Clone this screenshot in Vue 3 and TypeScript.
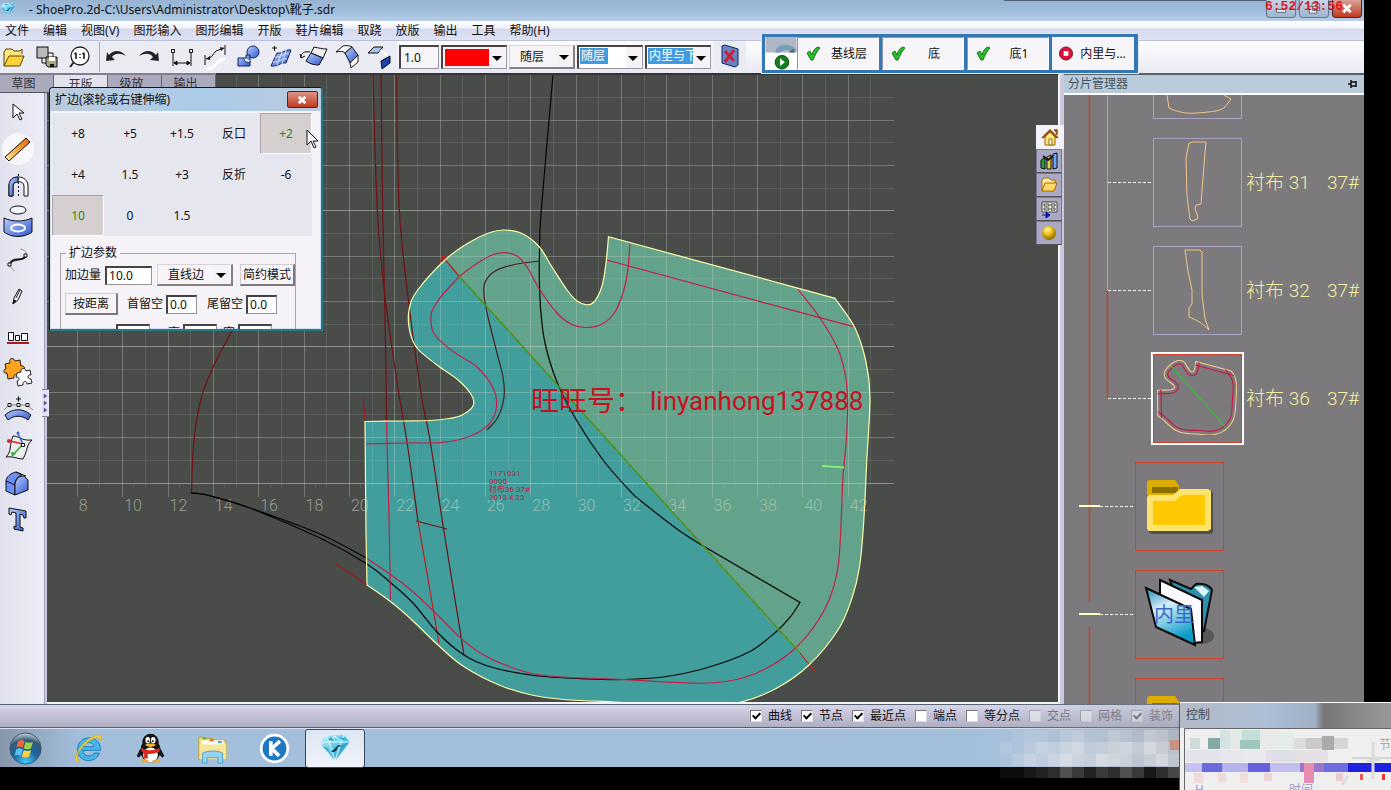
<script setup lang="ts">
import { ref } from 'vue'

type Pt = [number, number]

// Catmull-Rom spline through the given points, written as cubic segments
function spline(points: Pt[], start = 'M'): string {
  let d = `${start}${points[0][0]} ${points[0][1]}`
  for (let i = 0; i < points.length - 1; i++) {
    const p0 = points[Math.max(i - 1, 0)]
    const p1 = points[i]
    const p2 = points[i + 1]
    const p3 = points[Math.min(i + 2, points.length - 1)]
    const c = [
      p1[0] + (p2[0] - p0[0]) / 6, p1[1] + (p2[1] - p0[1]) / 6,
      p2[0] - (p3[0] - p1[0]) / 6, p2[1] - (p3[1] - p1[1]) / 6,
      p2[0], p2[1],
    ].map(n => n.toFixed(1))
    d += `C${c.join(' ')}`
  }
  return d
}

const menus = ['文件', '编辑', '视图(V)', '图形输入', '图形编辑', '开版', '鞋片编辑', '取跷', '放版', '输出', '工具', '帮助(H)']

interface Tool { name: string; art: string }

const fileTools: Tool[] = [
  { name: '打开', art: '<path d="M4 25V11l2-3h6l2 2h6l2-2v5" fill="#ffe680" stroke="#5a4300"/><path d="M4 25l5-10h15l-4 10z" fill="#ffd23c" stroke="#5a4300"/>' },
  { name: '另存', art: '<rect x="4" y="6" width="11" height="11" fill="#b9b9b9" stroke="#111"/><path d="M15 12h5v4M9 17v5h4" fill="none" stroke="#111"/><path d="M13 16h11v10H15l-2-2z" fill="#a8a77a" stroke="#111"/><path d="M16 16h6v4h-6z" fill="#fff"/><path d="M17 23h4v3h-4z" fill="#111"/>' },
  { name: '原始比例', art: '<circle cx="14" cy="15" r="9" fill="#fff" stroke="#222" stroke-width="1.3"/><path d="M8 21l-4 5" stroke="#222" stroke-width="2"/><path d="M10 12v6M18 12v6M8.500 13l2-1M16.500 13l2-1M14 13v1M14 16v1" stroke="#111" stroke-width="1.500" fill="none"/>' },
]

const drawTools: Tool[] = [
  { name: '撤销', art: '<path d="M6 20l1-9 2 3c5-6 12-5 17 1-6-3-11-3-14 1l3 3z" fill="#222"/>' },
  { name: '重做', art: '<path d="M26 20l-1-9-2 3C18 8 11 9 6 15c6-3 11-3 14 1l-3 3z" fill="#222"/>' },
  { name: '测距', art: '<path d="M7 11v14M25 11v14M8 22h16M8 22l3-2v4zM24 22l-3-2v4z" stroke="#111" fill="#111"/><path d="M5.500 8.500h3v3h-3zM23.500 8.500h3v3h-3z" fill="#fff" stroke="#111"/>' },
  { name: '弧长', art: '<path d="M8 27c8 3 8-9 18-9" fill="none" stroke="#fff" stroke-width="3"/><path d="M6 14v10M26 4v10M7 18l5-2 5-6 8-3" fill="none" stroke="#111"/><path d="M7 18l4-3v4zM25 7l-4-1 1 4z" fill="#111"/>' },
  { name: '图形', art: '<circle cx="21" cy="11" r="6" fill="url(#blue)" stroke="#10265a"/><path d="M6 17h8v-3h4v11H6z" fill="url(#blue)" stroke="#10265a"/><path d="M12 17a4 4 0 0 0 7 3" fill="#fff" stroke="#10265a"/>' },
  { name: '网面', art: '<path d="M12 12c6 1 8-4 14-3l-5 13c-5-1-9 4-15 3z" fill="url(#blue)" stroke="#10265a"/><path d="M10 16c6 1 8-4 14-3M8 21c6 1 8-4 14-3M17 11l-5 13M21 9l-4 14" stroke="#dbe6ff" fill="none"/><path d="M7 7h5M9.500 5v5" stroke="#111"/>' },
  { name: '翻转', art: '<path d="M13 12l3-6c5 1 8 2 13 2l-4 9z" fill="#eee" stroke="#111"/><path d="M13 12l12 5-4 7c-5 0-9-1-13-4z" fill="url(#blue)" stroke="#111"/><path d="M3 17c0-5 3-7 9-6M3 17l-1-4M3 17l4-2" fill="none" stroke="#111"/>' },
  { name: '折叠', art: '<path d="M5 11l7-6c4-1 7 0 9 1l-7 6c-2-2-5-2-9-1z" fill="#fff" stroke="#111"/><path d="M14 12l7-6 6 8-8 8z" fill="url(#blue)" stroke="#111"/><path d="M19 22l8-8v7l-7 6z" fill="#fff" stroke="#111"/>' },
  { name: '分离', art: '<path d="M4 12l6-6h9l-5 6z" fill="#a9c3f5" stroke="#111"/><path d="M16 10c6 1 7 4 8 9" fill="none" stroke="#fff" stroke-width="2"/><path d="M17 20l9-5v7l-8 6z" fill="#1c43a8" stroke="#111"/>' },
]

const sideTools: Tool[] = [
  { name: '选择', art: '<path d="M13 10v14l4-4 3 6 2-1-3-6h5z" fill="#fff" stroke="#111"/>' },
  { name: '扩边', art: '<circle cx="18" cy="18" r="16" fill="#fff" opacity=".7"/><path d="M5 26L26 7l4 4L9 30z" fill="url(#amber)" stroke="#111"/>' },
  { name: '对称', art: '<path d="M9 28V18c0-12 19-12 19 0v10h-4V18c0-6-11-6-11 0v10z" fill="#fff" stroke="#111"/><path d="M9 28V18c0-7 4-9 9-9v5c-3 0-5 1-5 4v10z" fill="url(#blue)" stroke="#111"/><path d="M18.500 6v24" stroke="#111" stroke-dasharray="2 2"/>' },
  { name: '投影', art: '<ellipse cx="18" cy="5" rx="8" ry="4" fill="#f4f6ff" stroke="#111"/><path d="M4 13c8 4 20 4 28 0v14c-8 6-20 6-28 0z" fill="url(#blue)" stroke="#111"/><ellipse cx="18" cy="23" rx="7" ry="3.500" fill="none" stroke="#fff" stroke-width="2"/>' },
  { name: '曲线', art: '<path d="M20 7c8 1 8 7 1 10s-12 3-11 6 3 5 5 6" fill="none" stroke="#999"/><path d="M10 22c2-8 14-1 16-9" fill="none" stroke="#111" stroke-width="2"/><path d="M8 21h3v3H8zM24 12h3v3h-3z" fill="#fff" stroke="#111"/>' },
  { name: '铅笔', art: '<path d="M13 25l1-6 5-9 3 2-4 9z" fill="#fff" stroke="#111"/><path d="M16 19l4-8M13 25l1-4 2 1z" stroke="#111" fill="#111"/>' },
  { name: '对齐', art: '<path d="M8.500 16.500h5v8h-5zM15.500 19.500h4v5h-4zM21.500 17.500h6v7h-6z" fill="#fff" stroke="#111"/><path d="M7 27h22" stroke="#b01820" stroke-width="2"/>' },
  { name: '拼图', art: '<path d="M5 11l5-1c-2-5 4-6 5-2l5-1 1 6c4-1 5 4 1 5l1 5-5 1c0-4-5-3-4 1l-6 1-1-6c-4 1-4-4-1-4z" fill="#ffa41c" stroke="#222"/><path d="M17 20l4-1c-1-4 4-5 5-1l4-1 1 5c-4-1-4 4 0 4l1 4-5 1c0-4-5-3-4 1l-5 1-1-5c3 0 3-4-1-4z" fill="#fff" stroke="#222"/>' },
  { name: '加点', art: '<path d="M16 9h5M18.500 6.500v5" stroke="#111" stroke-width="1.200"/><path d="M4 20l5-5h18l6 5" stroke="#888" fill="none"/><path d="M8 13.500h3v3H8zM17 13.500h3v3h-3zM26 13.500h3v3h-3z" fill="#fff" stroke="#111"/><path d="M5 25c8-7 18-7 26 0l-3 5c-6-5-14-5-20 0z" fill="url(#blue)" stroke="#111"/>' },
  { name: '坐标面', art: '<path d="M13 9c6 0 8 5 19 4-6 5-4 10-9 19-6 0-9-3-17-2 6-6 3-11 7-21z" fill="#eee" stroke="#111"/><path d="M23 17L10 14" stroke="#d22" stroke-width="1.500"/><circle cx="9" cy="14" r="2" fill="#d22"/><path d="M23 17L18 7" stroke="#36c" stroke-width="1.500"/><circle cx="18" cy="6" r="1.500" fill="#36c"/><path d="M23 17L13 28" stroke="#3a3" stroke-width="1.500"/><path d="M11 25l5 1-4 4z" fill="#3a3"/><path d="M21.500 16.500h3v3h-3z" fill="#fff" stroke="#111"/>' },
  { name: '立体', art: '<path d="M6 17c0-4 5-8 10-9l6 3c-4 1-7 5-7 9v11l-9-4z" fill="#6a8ff5" stroke="#111"/><path d="M15 31V20c1-6 5-8 9-8l4 4v10z" fill="url(#blue)" stroke="#111"/><path d="M6 17l9 4M16 8l10 4" stroke="#111" fill="none"/>' },
  { name: '文字', art: '<path d="M9 7l17 3v7h-2l-1-3-3-1v13l3 1v3l-9-2v-3l2 1V12l-4-1-1 3-2-1z" fill="url(#blue)" stroke="#111"/>' },
]

const tabs = ['草图', '开版', '级放', '输出']
const layerButtons = ['基线层', '底', '底1']
const offsets = ['+8', '+5', '+1.5', '反口', '+2', '+4', '1.5', '+3', '反折', '-6', '10', '0', '1.5']
const active = ref(new Set([4, 10]))
function toggle(i: number) {
  active.value.has(i) ? active.value.delete(i) : active.value.add(i)
}

const lineWidth = ref('1.0')
const margin = ref('10.0')
const headGap = ref('0.0')
const tailGap = ref('0.0')

const snaps = ref([
  { label: '曲线', on: true, dim: false },
  { label: '节点', on: true, dim: false },
  { label: '最近点', on: true, dim: false },
  { label: '端点', on: false, dim: false },
  { label: '等分点', on: false, dim: false },
  { label: '交点', on: false, dim: true },
  { label: '网格', on: false, dim: true },
  { label: '装饰', on: true, dim: true },
])

// Ruler grid: one column is two ruler units
const step = 45.35
const gridLeft = 77.8
const columns = Array.from({ length: 18 }, (_, i) => ({ x: gridLeft + i * step, n: 8 + i * 2 }))
const rows = Array.from({ length: 18 }, (_, k) => ({ y: 483.5 - k * step / 2, level: k % 6 === 0 ? 'strong' : k % 2 === 0 ? 'mid' : 'weak' }))

const leftEdge: Pt[] = [[365, 421.5], [400, 421], [430, 420.5], [449, 418.5], [462, 415], [473, 406], [471.5, 395], [458, 380], [437, 365], [417, 348], [409.5, 330], [409, 310], [417, 291], [445, 260], [470, 242], [490, 232.5], [505, 230], [522, 233.5], [539, 246.5], [552, 267], [567, 290], [577, 301], [586, 304.7], [594, 302], [602, 286], [606, 263], [608.5, 236.7]]
const rightEdge: Pt[] = [[835, 298.3], [855, 328], [866, 362], [870, 397], [867, 457], [863.5, 525], [859.5, 567], [852, 598], [838, 630], [809, 665], [777, 688], [741, 702], [700, 708], [650, 705], [616, 702], [570, 700], [534, 695.5], [499, 685], [463, 666], [438, 645], [412, 620], [391, 602], [367, 585]]
const outline = spline(leftEdge) + spline(rightEdge, 'L') + 'L366 533Z'

const seams = [
  spline([[365, 444], [407, 443], [440, 442.7], [460, 439.5], [477, 433], [490, 423], [496.5, 407], [493, 388], [477, 367], [453, 351.5], [435, 335], [431, 320], [435, 305], [458, 278], [477, 263.5], [492, 255], [505, 252.7], [517, 256], [527, 267], [540, 290], [557, 313], [571, 324], [587, 327.5], [603, 323.5], [615, 312], [623, 293], [627.5, 273], [630, 243.5]]),
  'M606.700 260L853.300 326.700',
  spline([[797.7, 289], [820, 318], [837, 347], [845, 373], [847.5, 400], [846.5, 437], [843, 477], [841, 525], [838, 567], [829, 600], [813, 628], [791, 652], [763, 670], [734, 680], [699, 683.3], [624, 679.7], [549, 676], [513, 668], [481, 653.5], [459, 636.5], [434, 611.5], [406, 586], [367, 558.5]]),
  'M386.500 420L389.300 530L390.400 600',
]
const darkReds = [
  spline([[381, 75], [382.7, 210], [384.3, 287], [386, 370], [386.5, 420]]),
  spline([[373, 75], [377.3, 210], [384.3, 290], [396.7, 380], [406.7, 440], [418, 521]]),
  spline([[396.5, 75], [399.3, 210], [410, 313], [421.7, 397], [430, 440], [443.3, 527], [464, 655]]),
  spline([[232, 331], [215, 363], [203, 392], [196.7, 420], [193, 453], [191.5, 493]]),
  'M416 521L447 529',
]
const blacks = [
  spline([[191, 493], [207, 495], [250, 508], [320, 534], [367, 558.5]]),
  spline([[191, 493], [207, 495], [250, 508], [320, 538], [367, 564], [391, 583], [413, 603], [438, 633], [464, 655], [491, 667], [534, 675.5], [588, 679], [624, 679.5], [663, 677], [706, 668], [749, 652], [777, 631], [791, 616], [800, 602.5]]) +
    spline([[698.6, 543.3], [677, 529], [641, 501], [630, 491], [603, 460], [577, 421], [557, 382], [545, 343], [540.7, 310], [539.3, 277], [539.7, 243], [541.3, 210], [553, 75]], 'L'),
]
const lining = spline([[540, 261], [517, 264], [497, 270], [485.5, 281], [484, 295], [488, 317], [497, 353], [503, 377], [504, 397], [498, 417], [487, 430]])

const stamp = ['1171031', '0000', '衬布36 37#', '2013 4 23']

const pieces = [
  { y: 138, name: '衬布 31', shape: 'M1189 143l4-1h13l-1 10-4 52-5 1-1 4 3 8-1 2-5 2-2-2-3-23-1-38z' },
  { y: 246, name: '衬布 32', shape: 'M1185 250h15l2 2v42l3 25 4 11c-7-7-12-10-20-13v-9l3-4v-14l-4-19z' },
]

// Brightness levels of the translucent mosaic strip, one digit per 12px cell (0 = clear)
const smokeRows = [
  '0012213422432542',
  '0213546745675864',
  '0135468658764685',
  '0112347535475246',
]
const smokes = smokeRows.flatMap((row, r) =>
  [...row].map((v, c) => ({ x: 988 + c * 12, y: 730 + r * 12, a: Number(v) / (r === 3 ? 20 : 11) })).filter(s => s.a > 0))

const controlCells: [number, number, number, number, string][] = [
  [10, 36, 10, 11, '#cfdcd9'], [28, 36, 12, 11, '#83aaa4'], [40, 28, 10, 19, '#d3e3e0'], [50, 28, 12, 19, '#e3e9e8'], [62, 28, 18, 10, '#c1ded8'], [60, 38, 20, 9, '#a1c4bd'], [80, 28, 20, 19, '#e8eaea'], [100, 30, 14, 17, '#e4ece9'], [114, 36, 12, 11, '#dcdcdd'], [126, 36, 16, 11, '#c9c9ca'], [142, 34, 12, 14, '#a9abac'], [154, 36, 14, 11, '#d4d5d5'],
  [6, 48, 34, 12, '#e4e3ec'], [40, 48, 24, 12, '#e6e6ec'], [64, 48, 22, 12, '#eaeaee'], [86, 48, 30, 12, '#dfdfe7'], [116, 48, 32, 12, '#e6e0e5'],
  [5, 61, 17, 9, '#c6c1f0'], [22, 61, 20, 9, '#6b69de'], [42, 61, 26, 9, '#b6b2ec'], [68, 61, 22, 9, '#6460df'], [90, 61, 30, 9, '#c2bfee'], [120, 61, 24, 9, '#9b76cb'], [144, 61, 24, 9, '#6f6ce2'], [168, 61, 44, 9, '#1f1fe0'],
  [14, 71, 9, 10, '#f0d9db'], [38, 71, 8, 9, '#efdadc'], [60, 71, 8, 10, '#f1dddd'], [84, 71, 8, 8, '#ecd3d8'], [124, 61, 10, 20, '#e58cb0'], [156, 71, 7, 8, '#ecccd3'], [180, 72, 3, 6, '#e55'], [202, 72, 3, 6, '#e33'],
]
</script>

<template>
  <div class="desktop">
    <svg class="defs" aria-hidden="true">
      <defs>
        <linearGradient id="blue" x1="0" y1="0" x2="1" y2="1"><stop offset="0" stop-color="#b9ccff" /><stop offset="1" stop-color="#3058cf" /></linearGradient>
        <linearGradient id="amber" x1="1" y1="0" x2="0" y2="1"><stop offset="0" stop-color="#e8600c" /><stop offset=".5" stop-color="#f5a93c" /><stop offset="1" stop-color="#ffef9a" /></linearGradient>
        <linearGradient id="gem" x1="0" y1="0" x2="1" y2="1"><stop offset="0" stop-color="#c5f3fb" /><stop offset=".5" stop-color="#58c6e6" /><stop offset="1" stop-color="#1f8cc4" /></linearGradient>
        <linearGradient id="cover" x1="0" y1="0" x2=".4" y2="1"><stop offset="0" stop-color="#2388b8" /><stop offset=".4" stop-color="#d7effa" /><stop offset="1" stop-color="#0a9bc8" /></linearGradient>
        <radialGradient id="orb" cx=".5" cy=".95" r=".9"><stop offset="0" stop-color="#3fd2ff" /><stop offset=".45" stop-color="#1a67a2" /><stop offset=".8" stop-color="#365a78" /><stop offset="1" stop-color="#a9bccb" /></radialGradient>
        <radialGradient id="gold" cx=".4" cy=".3" r=".7"><stop offset="0" stop-color="#fffbd0" /><stop offset=".4" stop-color="#f5c518" /><stop offset="1" stop-color="#8b6400" /></radialGradient>
        <symbol id="diamond" viewBox="0 0 32 28">
          <path d="M1 9L7 2l18-1 6 7-15 19z" fill="url(#gem)" />
          <path d="M1 9l9-1 6 19 6-19 9 0M7 2l3 6 6-6 6 6 3-7M10 8h12" fill="none" stroke="#eafcff" />
          <path d="M3 12l5 2 3 5zM29 8l-6 3-2 7zM12 3l3 4-6-1zM20 3l4 3 4-1z" fill="#2f9fcc" />
          <path d="M12 17c3 0 4-4 8-6l3 1-4 1c-1 3-2 5-6 5z" fill="#0d3a5c" />
        </symbol>
        <symbol id="tick" viewBox="0 0 14 15"><path d="M1 7l3-2 2 4c1-4 3-7 6-8l2 1C11 5 9 9 7 14H5z" fill="#2bbf2b" stroke="#0c7a14" /></symbol>
      </defs>
    </svg>

    <div class="app">
      <header class="titlebar">
        <svg class="logo"><use href="#diamond" /></svg>
        <h1>- ShoePro.2d-C:\Users\Administrator\Desktop\靴子.sdr</h1>
        <i class="seam-top" />
        <div class="winbuttons">
          <button aria-label="最小化"><svg viewBox="0 0 30 18"><path d="M10 10h10v3H10z" fill="#fff" stroke="#556" /></svg></button>
          <button aria-label="还原"><svg viewBox="0 0 30 18"><path d="M13 4h8v7h-8zM10 7h8v7h-8z" fill="#fff" stroke="#556" /></svg></button>
          <button class="close" aria-label="关闭"><svg viewBox="0 0 30 18"><path d="M11 5l8 8M19 5l-8 8" stroke="#fff" stroke-width="3" /></svg></button>
        </div>
        <span class="clock">6:52/13:56</span>
      </header>

      <nav class="menubar">
        <button v-for="m in menus" :key="m">{{ m }}</button>
      </nav>

      <div class="toolbar">
        <button v-for="t in fileTools" :key="t.name" class="tool" :aria-label="t.name"><svg viewBox="0 0 33 32" v-html="t.art" /></button>
        <i class="sep" />
        <button v-for="t in drawTools" :key="t.name" class="tool" :aria-label="t.name"><svg viewBox="0 0 33 32" v-html="t.art" /></button>
        <div class="fields">
          <input v-model="lineWidth" class="width" aria-label="线宽">
          <label class="pick swatch"><select aria-label="颜色"><option label=" " /></select><i /></label>
          <label class="pick flat"><select aria-label="线型"><option>随层</option></select><i /></label>
          <label class="pick marked"><select aria-label="线层"><option>随层</option></select><i /></label>
          <label class="pick marked long"><select aria-label="图层"><option>内里与下</option></select><i /></label>
        </div>
        <button class="tool" aria-label="隐藏图层"><svg viewBox="0 0 33 32"><path d="M9 5l3-1 13 4v16l-3 2-13-4z" fill="#6585c4" stroke="#10265a" /><path d="M12 10l9 10M21 9l-9 12" stroke="#c8203a" stroke-width="3" /></svg></button>
        <div class="layers">
          <button class="run" aria-label="运行">
            <svg viewBox="0 0 32 34"><path d="M0 0h32v16H0z" fill="#afb6c6" /><path d="M10 16c2-10 14-10 22-3l-2 4c-7-5-12-4-15-1z" fill="#769dbb" /><path d="M24 16l5-4v4z" fill="#654" /><circle cx="17" cy="26" r="7" fill="#12801c" stroke="#0b4a10" /><path d="M15 22l5 4-5 4z" fill="#fff" /></svg>
          </button>
          <button v-for="l in layerButtons" :key="l" class="layer"><svg><use href="#tick" /></svg><span>{{ l }}</span></button>
          <button class="layer stop"><svg viewBox="0 0 15 15"><circle cx="7.500" cy="7.500" r="7" fill="#d8143c" stroke="#7a0c20" /><path d="M5 5h5v5H5z" fill="#fff" /></svg><span>内里与...</span></button>
        </div>
      </div>

      <main class="work">
        <aside class="side">
          <button v-for="t in sideTools" :key="t.name" :aria-label="t.name"><svg viewBox="0 0 37 37" v-html="t.art" /></button>
        </aside>

        <div class="tabs" role="tablist">
          <button v-for="(t, i) in tabs" :key="t" role="tab" :class="{ current: i === 1 }">{{ t }}</button>
        </div>

        <button class="grip" aria-label="收起"><svg viewBox="0 0 8 28"><path d="M2 3l4 3-4 3zM2 11l4 3-4 3zM2 19l4 3-4 3z" fill="#5a50a8" /></svg></button>

        <section class="canvas">
          <svg viewBox="47 75 1011 627" preserveAspectRatio="xMinYMin slice">
            <clipPath id="upper"><path d="M445 260L809 665L900 665V200H445Z" /></clipPath>
            <path :d="outline" fill="#429e9c" />
            <path :d="outline" fill="#63a38b" clip-path="url(#upper)" />
            <g class="grid">
              <path v-for="r in rows" :key="r.y" :class="r.level" :d="`M47 ${Math.round(r.y) - 0.5}H894`" />
              <path v-for="c in columns" :key="c.n" class="mid" :d="`M${Math.round(c.x) - 0.5} 75V497`" />
              <path v-for="c in columns" :key="c.n" class="weak" :d="`M${Math.round(c.x + step / 2) - 0.5} 75V488M${Math.round(c.x + step / 4) - 0.5} 484v4`" />
            </g>
            <g class="ruler"><text v-for="c in columns" :key="c.n" :x="c.x + 1" y="511">{{ c.n }}</text></g>
            <path v-for="d in darkReds" :key="d" :d="d" class="darkred" />
            <path d="M418 521L439 643" class="red" />
            <path v-for="d in blacks" :key="d" :d="d" class="black" />
            <path :d="lining" class="lining" />
            <path v-for="d in seams" :key="d" :d="d" class="seam" />
            <path d="M458 275L800 653" class="fold" />
            <path d="M458 275L800 653" class="fold dots" />
            <path d="M442 256L459 276M800 653L816 673M440 261l7-6" class="red" />
            <path d="M363 398L365 420M335 563L367 585" class="red faint" />
            <path :d="outline" class="edge" />
            <path d="M822 466L844 467.500" class="notch" />
            <g class="stamp"><text v-for="(s, i) in stamp" :key="s" x="489" :y="476 + i * 8">{{ s }}</text></g>
            <text class="mark" x="531" y="411">旺旺号：</text>
            <text class="mark latin" x="650" y="410">linyanhong137888</text>
          </svg>
        </section>

        <div class="dock">
          <button class="current" aria-label="主页"><svg viewBox="0 0 20 20"><path d="M2 11l8-8 8 8M14 3h3v5" fill="#d33" stroke="#8a5200" stroke-width="1.500" /><path d="M5 10l5-5 5 5v8H5z" fill="#ffe680" stroke="#9a6a00" /><path d="M9 12h3v6H9z" fill="#fff" stroke="#9a6a00" /></svg></button>
          <button aria-label="统计"><svg viewBox="0 0 20 20"><path d="M2 9l4-2v11l-4-1z" fill="#2b9c3b" stroke="#111" /><path d="M8 6l4-2v14H8z" fill="#e8d03c" stroke="#111" /><path d="M14 3l4-1v15l-4 1z" fill="#69a5ef" stroke="#111" /><path d="M4 5l5 4 5-4" stroke="#111" stroke-width="2" fill="none" /></svg></button>
          <button aria-label="文件夹"><svg viewBox="0 0 20 20"><path d="M3 16V5l2-2h5l2 2h4v3" fill="#ffe9a0" stroke="#a46c00" /><path d="M3 16l3-8h12l-3 8z" fill="#ffd869" stroke="#a46c00" /></svg></button>
          <button aria-label="属性"><svg viewBox="0 0 20 20"><path d="M3 3h15v10H3z" fill="#f5f3c8" stroke="#445" /><path d="M5 5h5v2H5zM12 5h4v2h-4zM5 9h5v2H5zM12 9h4v2h-4z" fill="#fff" stroke="#445" /><path d="M3 16h5M7 13l4 3-4 3z" fill="#11a" stroke="#11a" /></svg></button>
          <button aria-label="材质"><svg viewBox="0 0 20 20"><circle cx="10" cy="10" r="7" fill="url(#gold)" /></svg></button>
        </div>

        <section class="panel">
          <header><h2>分片管理器</h2><svg viewBox="0 0 10 8"><path d="M0 4h3M3 0v8M3 2h5v4H3M8 1v6" stroke="#111" fill="none" stroke-width="1.500" /></svg></header>
          <svg class="tree" viewBox="1064 95 300 609" preserveAspectRatio="xMinYMin slice">
            <path d="M1107.500 95V290" stroke="#aaa2c2" />
            <path d="M1089.500 95V602M1089.500 627V704M1107.500 290V398" stroke="#c8402c" stroke-width="1.500" />
            <g class="box"><path d="M1153.500 90v28.500h88V90" /><path d="M1167 95l2 13c8 4 18 6 28 5s22-1 28-6l6-8-7-4" class="outline" /></g>
            <template v-for="p in pieces" :key="p.y">
              <rect class="box" x="1153.500" :y="p.y + 0.5" width="88" height="88" />
              <path class="outline" :d="p.shape" />
              <path class="link" :d="`M1108 ${p.y + 44.5}H1153`" />
              <text x="1246" :y="p.y + 51">{{ p.name }}</text><text x="1327" :y="p.y + 51">37#</text>
            </template>
            <rect x="1152" y="353" width="91" height="91" fill="none" stroke="#fff" stroke-width="2" />
            <rect class="hot" x="1153.500" y="354.500" width="88" height="88" />
            <path class="link" d="M1108 398.500H1152" />
            <svg x="1157" y="360" width="80" height="75" viewBox="362 228 510 480" preserveAspectRatio="none">
              <path :d="outline" class="mini pale" />
              <path v-for="d in seams" :key="d" :d="d" class="mini pink" />
              <path d="M450 265L808 665" class="mini lime" />
            </svg>
            <text x="1246" y="405">衬布 36</text><text x="1327" y="405">37#</text>
            <g v-for="y in [462, 678]" :key="y">
              <rect class="hot" x="1135.500" :y="y + 0.5" width="88" height="88" />
              <g :transform="`translate(1146 ${y + 17})`">
                <rect x="3" y="12" width="64" height="43" rx="3" fill="#333" opacity=".6" />
                <path d="M1 16V3l2-2h26l4 6v9z" fill="#dcae00" /><path d="M6 8h26v6H6z" fill="#8b7000" />
                <path d="M1 18l2-2h24l7-6h28l3 2v38l-3 2H3l-2-2z" fill="#ffe36a" /><path d="M7 22h22l7-6h23v30H7z" fill="#ffc900" />
              </g>
            </g>
            <rect class="hot" x="1135.500" y="570.500" width="88" height="88" />
            <ellipse cx="1202" cy="636" rx="12" ry="8" fill="#333" opacity=".5" />
            <path d="M1170 580l21 9 5-5c8-1 13 1 16 6l-8 41-12 6z" fill="#2f8fae" stroke="#0a0a0a" stroke-width="2" />
            <path d="M1194 587l8-1 7 5-5 6z" fill="#dff4f8" />
            <path d="M1160 580l42 20v42l-8 1-34-20z" fill="#fdfaff" stroke="#0a0a0a" stroke-width="2" />
            <path d="M1146 588l45 21 4 36-39-18z" fill="url(#cover)" stroke="#0a0a0a" stroke-width="2" />
            <text class="inner" x="1154" y="622">内里</text>
            <path class="link" d="M1100 506.500H1135M1100 614.500H1135" />
            <path d="M1079 506H1100M1079 614H1100" stroke="#ffffc0" stroke-width="2" />
          </svg>
        </section>

        <section class="dialog">
          <header><h2>扩边(滚轮或右键伸缩)</h2><button aria-label="关闭"><svg viewBox="0 0 30 16"><path d="M11 5l7 7M18 5l-7 7" stroke="#fff" stroke-width="3" /></svg></button></header>
          <div class="offsets">
            <button v-for="(o, i) in offsets" :key="i" :class="{ on: active.has(i) }" @click="toggle(i)">{{ o }}</button>
          </div>
          <fieldset>
            <legend>扩边参数</legend>
            <div class="line first">
              <label for="margin">加边量</label><input id="margin" v-model="margin" class="wide">
              <label class="pick edgekind"><select aria-label="边类型"><option>直线边</option></select><i /></label>
              <button>简约模式</button>
            </div>
            <div class="line second">
              <button>按距离</button>
              <label for="head">首留空</label><input id="head" v-model="headGap">
              <label for="tail" class="tail">尾留空</label><input id="tail" v-model="tailGap">
            </div>
            <div class="line third">
              <input value="0.0" aria-label="长"><label for="high">高</label><input id="high" value="0.0"><label for="broad">宽</label><input id="broad" value="0.0">
            </div>
          </fieldset>
          <svg class="pointer" viewBox="0 0 12 20"><path d="M1 1v15l4-4 3 7 2-1-3-6h5z" fill="#fff" stroke="#111" /></svg>
        </section>
      </main>

      <footer class="status">
        <label v-for="s in snaps" :key="s.label" :class="{ dim: s.dim }"><input v-model="s.on" type="checkbox"><span>{{ s.label }}</span></label>
      </footer>

      <nav class="taskbar">
        <button aria-label="开始"><svg viewBox="0 0 36 36"><circle cx="18" cy="18" r="17" fill="url(#orb)" stroke="#37526b" /><path d="M10 10c3-2 5-1 7 0l-2 7c-2-1-4-2-7 0z" fill="#f0683c" /><path d="M18 11c3 1 5 1 8 0l-2 7c-3 1-5 1-8 0z" fill="#9fd046" /><path d="M8 19c3-2 5-1 7 0l-2 7c-2-1-4-2-7 0z" fill="#5cc3f5" /><path d="M16 20c3 1 5 1 8 0l-2 7c-3 1-5 1-8 0z" fill="#ffd03c" /></svg></button>
        <button aria-label="浏览器"><svg viewBox="0 0 36 36"><path d="M31 20H12c0 7 9 8 12 3h6c-4 12-24 11-24-4C6 2 32 2 31 20zM12 16h12c-1-6-11-6-12 0z" fill="#45b5ea" stroke="#1877b8" /><path d="M9 32c-6 2-7-3-3-10C11 11 23 3 30 3c3 0 3 4 1 7 0-4-2-4-4-4C19 7 5 21 6 28c0 2 1 3 3 4z" fill="#f5cf2e" stroke="#c79a10" stroke-width=".5" /></svg></button>
        <button aria-label="QQ"><svg viewBox="0 0 36 36"><ellipse cx="18" cy="20" rx="11" ry="13" fill="#151515" /><circle cx="18" cy="11" r="9" fill="#151515" /><path d="M7 18l-4 8 2 2 4-4zM29 18l4 8-2 2-4-4z" fill="#151515" /><ellipse cx="18" cy="25" rx="8" ry="8" fill="#fff" /><ellipse cx="15" cy="9" rx="2.500" ry="3.500" fill="#fff" /><ellipse cx="21" cy="9" rx="2.500" ry="3.500" fill="#fff" /><circle cx="15.500" cy="10" r="1" /><circle cx="20.500" cy="10" r="1" /><path d="M12 14c4-2 8-2 12 0-3 3-9 3-12 0z" fill="#f7b52c" /><path d="M8 17c6 4 14 4 20 0v4c-5 3-9 3-13 3v5h-4v-6l-3-2z" fill="#d92a22" /><path d="M7 33c1-4 9-4 10 0zM19 33c1-4 9-4 10 0z" fill="#f7a91c" /></svg></button>
        <button aria-label="资源管理器"><svg viewBox="0 0 36 36"><path d="M3 6l5-1 2 2h8l2 2h12l1 3v18H3z" fill="#f1db84" stroke="#b69a3a" /><path d="M6 9h24v6H6z" fill="#fffbe8" /><path d="M7 6h4v2H7z" fill="#3b3" /><path d="M15 8h4v2h-4z" fill="#d53" /><path d="M24 10h4v2h-4z" fill="#39c" /><path d="M4 13l12 1 17-1v17H4z" fill="#f7e79e" /><path d="M7 34V23c7-3 16-3 22 0v11h-5v-6H12v6z" fill="#93d3ee" stroke="#4c9cc0" /></svg></button>
        <button aria-label="K"><svg viewBox="0 0 36 36"><circle cx="18" cy="18" r="14.500" fill="#1f78c4" stroke="#fff" stroke-width="3" /><path d="M14 10v16M24 10l-9 8 8 8" stroke="#fff" stroke-width="4" fill="none" /></svg></button>
        <button class="running" aria-label="ShoePro"><svg><use href="#diamond" /></svg></button>
      </nav>
    </div>

    <svg class="smoke" viewBox="970 704 210 86" aria-hidden="true">
      <defs><linearGradient id="haze"><stop offset="0" stop-color="#c5ced8" stop-opacity="0" /><stop offset="1" stop-color="#9fa4ae" /></linearGradient></defs>
      <rect x="970" y="704" width="210" height="24" fill="url(#haze)" opacity=".35" />
      <rect x="970" y="728" width="210" height="39" fill="url(#haze)" opacity=".8" />
      <rect v-for="(c, i) in smokes" :key="i" :x="c.x" :y="c.y" width="12" height="12" fill="#e6e7e9" :opacity="c.a" />
      <rect x="1170" y="740" width="9" height="10" fill="#c99280" />
    </svg>
    <section class="control">
      <h2>控制</h2>
      <svg viewBox="0 26 212 62" preserveAspectRatio="xMinYMin slice">
        <rect y="26" width="212" height="62" fill="#efeff0" /><path d="M4.500 88V26.500H212" fill="none" stroke="#66666c" />
        <rect v-for="(c, i) in controlCells" :key="i" :x="c[0]" :y="c[1]" :width="c[2]" :height="c[3]" :fill="c[4]" />
        <path d="M172 56h40" stroke="#bbb" /><path d="M193 40v37M187 59l13-2M162 83l6-9" stroke="#dcdcdd" stroke-width="3" />
        <text x="199" y="47" fill="#aaa">节</text><text x="109" y="92" fill="#9a9ac8">时间</text><text x="15" y="92" fill="#9a9ac8">H</text>
      </svg>
    </section>
  </div>
</template>

<style>
html, body { background: #000; }
body { margin: 0; overflow: hidden; }
</style>

<style scoped>
.desktop { position: relative; height: 100vh; overflow: hidden; background: #000; box-sizing: border-box; padding: 0 27px 23px 0; font: 12px/16px "Noto Sans", "Noto Sans CJK SC", sans-serif; color: #111; }
.desktop * { box-sizing: border-box; }
.defs { position: absolute; width: 0; height: 0; }
button, input, select { font: inherit; color: inherit; margin: 0; padding: 0; border: 0; background: none; border-radius: 0; }
button { white-space: nowrap; }
h1, h2 { margin: 0; font: inherit; }
svg { display: block; }
.app { height: 100%; display: flex; flex-direction: column; }

.titlebar { position: relative; flex: none; height: 21px; display: flex; align-items: flex-start; background: linear-gradient(#98b4d2, #a2bddb 60%, #b9cfe8); }
.logo { width: 16px; height: 14px; margin: 2px 13px 0 0; }
.titlebar h1 { line-height: 19px; }
.seam-top { width: 262px; height: 1px; margin-left: auto; background: #4c6078; }
.winbuttons { display: flex; gap: 3px; padding-right: 2px; }
.winbuttons button { width: 30px; height: 18px; border: 1px solid #65798f; border-top: 0; border-radius: 0 0 4px 4px; background: linear-gradient(#c5d5e7, #9fb6cf); }
.winbuttons svg { width: 100%; height: 100%; }
.winbuttons .close { background: linear-gradient(#dba294, #c03a22); border-color: #5e2018; }
.clock { position: absolute; right: 21px; top: 0; font: bold 13px/14px "Liberation Mono", monospace; color: #e0141e; }

.menubar { flex: none; height: 19px; display: flex; gap: 14px; padding: 0 5px; background: linear-gradient(#fff, #f2f3fb 35%, #d6daee 45%, #dfe2f3); }
.menubar button { line-height: 19px; }

.toolbar { position: relative; flex: none; height: 33px; display: flex; align-items: center; background: linear-gradient(#fdfdff, #e9e9f4); border-top: 1px solid #b9bfd6; }
.tool { flex: none; width: 33px; height: 32px; background: #ebebf3; }
.tool svg { width: 33px; height: 32px; }
.sep { width: 1px; height: 30px; background: #a8a8b8; }
.fields { flex: none; display: flex; gap: 2px; padding: 0 2px; height: 24px; background: #f6f4f8; }
.width { width: 40px; border: 1px inset #98949a; border-width: 2px 1px 1px 2px; padding: 0 3px; background: #f7f5f8; }
.pick { position: relative; display: block; width: 66px; border: 1px inset #98949a; border-width: 2px 1px 1px 2px; background: #fff; }
.pick select { width: 100%; height: 100%; appearance: none; outline: 0; display: block; }
.pick i { position: absolute; right: 1px; top: 0; bottom: 0; width: 15px; background: #f4f2f6; pointer-events: none; }
.pick i::after { content: ""; position: absolute; left: 2px; top: 9px; border: 5px solid transparent; border-top-color: #000; border-bottom: 0; }
.swatch select { background: #f00; border: 2px solid #f4f2f6; width: 48px; }
.pick.flat, .pick.edgekind { border: 1px outset #d8d4d8; border-width: 1px 2px 2px 1px; background: #f7f4f8; }
.flat select { padding-left: 10px; }
.marked select { color: #fff; width: 28px; background: #429be0; height: 16px; margin: 1px; line-height: 16px; padding-left: 1px; }
.marked.long select { width: 45px; }

.layers { position: absolute; left: 762px; top: -7px; height: 39px; display: flex; gap: 3px; padding: 3px 4px 3px 3px; background: #3377b4; outline: 1px solid #dfe8f4; z-index: 2; }
.run { width: 32px; background: #fff; margin-right: -3px; }
.run svg { width: 32px; height: 33px; }
.layer { width: 82px; display: flex; align-items: center; background: #f7f5f8; border: 1px solid #8c98a8; border-right-color: #fff; border-bottom-color: #fff; padding-left: 8px; }
.layer svg { flex: none; width: 14px; height: 15px; }
.layer span { flex: 1; text-align: center; }
.stop { border-color: #f7f5f8; padding-left: 6px; }

.work { position: relative; flex: 1; min-height: 0; display: flex; background: #c9c8dc; }
.side { flex: none; width: 45px; margin-right: 2px; padding-top: 21px; background: linear-gradient(90deg, #e2e2ee, #ededf7); border-right: 1px solid #9d9cb0; }
.side button { display: block; width: 37px; height: 37px; }
.side svg { width: 37px; height: 37px; overflow: visible; }
.tabs { position: absolute; left: 0; top: 0; display: flex; height: 20px; background: #a7a7b9; border-top: 2px solid #80808f; z-index: 1; }
.tabs button { width: 54px; height: 18px; line-height: 17px; color: #33333c; background: #aaaabc; border-right: 1px solid #66667a; border-bottom: 1px solid #55556a; overflow: hidden; padding-right: 6px; }
.tabs .current { background: #e2e2ec; border-bottom: 0; padding: 0; }
.grip { position: absolute; left: 42px; top: 316px; width: 7px; height: 28px; background: #e6e4f2; border: solid #888; border-width: 1px 0; z-index: 1; }
.grip svg { width: 7px; height: 26px; }
.canvas { flex: 1; min-width: 0; border-top: 2px solid #343638; border-bottom: 2px solid #f4f4f8; border-right: 2px solid #f4f4f8; background: #4a4c49; overflow: hidden; }
.canvas svg { width: 100%; height: 100%; }
.grid path { fill: none; stroke: #c8d6c8; }
.grid .strong { stroke-opacity: .5; }
.grid .mid { stroke-opacity: .33; }
.grid .weak { stroke-opacity: .13; }
.ruler text { font: 300 16px Roboto, sans-serif; fill: #c8d6c8; fill-opacity: .6; }
.darkred, .black, .red, .seam, .lining, .edge, .fold, .notch { fill: none; stroke-width: 1.2; }
.darkred { stroke: #6e1214; }
.black { stroke: #050505; }
.lining { stroke: #43201e; }
.red { stroke: #c01c1c; }
.faint { stroke: #a01c1c; }
.seam { stroke: #c51e48; }
.fold { stroke: #38a01c; stroke-width: 1.5; }
.fold.dots { stroke: #a06420; stroke-dasharray: 2 6; }
.edge { stroke: #fbfba8; }
.notch { stroke: #84ec78; stroke-width: 2; }
.stamp text { font: 8px Roboto, "Noto Sans CJK SC", sans-serif; fill: #d0143c; }
.mark { font: 28px "Noto Sans CJK SC", sans-serif; fill: #c8101e; }
.latin { font: 26px Roboto, sans-serif; }

.dock { position: relative; z-index: 1; flex: none; width: 26px; margin: 52px 0 0 -24px; height: 118px; }
.dock button { display: grid; place-items: center; width: 26px; height: 24px; background: #a9a9c4; border: 1px solid #77778f; border-bottom-color: #555; }
.dock .current { width: 28px; background: #f2f2f8; border-color: #f2f2f8; }
.dock svg { width: 20px; height: 20px; }
.panel { flex: none; width: 300px; margin-left: 2px; border-top: 2px solid #5b6068; display: flex; flex-direction: column; background: #7c7a7c; }
.panel header { flex: none; height: 20px; padding: 0 6px 0 4px; display: flex; align-items: center; justify-content: space-between; background: #b9cbdb; border-bottom: 2px solid #fff; color: #44525c; }
.panel header svg { width: 10px; height: 8px; }
.tree { flex: 1; min-height: 0; width: 100%; }
.box, .box path { fill: none; stroke: #aaa2c2; }
.outline, .box .outline { fill: none; stroke: #f3c788; }
.hot { fill: none; stroke: #d0402c; }
.link { fill: none; stroke: #fff; stroke-dasharray: 3 2; }
.tree text { font: 300 19px Roboto, "Noto Sans CJK SC", sans-serif; fill: #f5f0a0; }
.tree .inner { font-size: 20px; font-weight: 400; fill: #3869c8; }
.mini { fill: none; stroke-width: 7; }
.pale { stroke: #f3c788; }
.pink { stroke: #cc1448; }
.lime { stroke: #2cc42c; }

.dialog { position: absolute; left: 49px; top: 14px; width: 274px; height: 244px; z-index: 3; border: 1px solid #101820; border-right: 2px solid #267a86; border-bottom: 2px solid #267a86; border-radius: 4px 4px 0 0; background: #f6f3f8; box-shadow: inset 0 0 0 1px #cfe0f0; overflow: hidden; }
.dialog header { height: 23px; display: flex; justify-content: space-between; padding: 3px 3px 0 5px; background: linear-gradient(90deg, #bdcbdc, #abcbe9 60%, #bccbdd); }
.dialog header h2 { line-height: 18px; }
.dialog header button { width: 31px; height: 17px; border: 1px solid #5c2018; border-radius: 2px; background: linear-gradient(#dc9485, #c03a22); }
.dialog header svg { width: 100%; height: 100%; }
.offsets { display: grid; grid-template-columns: repeat(5, 52px); grid-auto-rows: 41px; margin: 2px 0 0 2px; width: 260px; background: #e6e6ef; }
.offsets button.on { color: #1d8a1d; background: #d6cfcf; border: 1px solid #aaa4a6; border-right-color: #fff; border-bottom-color: #fff; }
fieldset { margin: 9px 0 0 10px; width: 236px; padding: 2px 0 0 4px; border: 1px solid #a8a4a8; height: 110px; min-width: 0; }
legend { padding: 0 3px; margin-left: 1px; line-height: 16px; }
.line { display: flex; align-items: center; gap: 4px; height: 24px; }
.line button { height: 22px; padding: 0 7px; border: 1px outset #d0ccd0; border-width: 1px 2px 2px 1px; background: #f7f4f8; }
.line input { width: 31px; height: 19px; border: 1px inset #98949a; border-width: 2px 1px 1px 2px; background: #fff; padding: 0 2px; }
.line .wide { width: 47px; }
.line .edgekind { width: 76px; height: 22px; margin: 0 3px 0 1px; }
.edgekind select { padding-left: 10px; }
.edgekind i { right: 2px; }
.edgekind i::after { top: 8px; }
.first button { padding: 0 2px; margin-right: -4px; }
.second { height: 34px; gap: 3px; }
.second button { margin-right: 6px; }
.second .tail { margin-left: 7px; }
.third { padding-left: 51px; gap: 3px; }
.third input { width: 34px; }
.third label { margin-left: 15px; }
.third label + input + label { margin-left: 3px; }
.pointer { position: absolute; left: 256px; top: 41px; width: 12px; height: 20px; }

.status { flex: none; height: 24px; display: flex; align-items: center; gap: 9px; padding: 0 191px 0 10px; justify-content: flex-end; background: linear-gradient(#d6d4ea, #aeaec2); border-top: 1px solid #55606c; border-bottom: 1px solid #55606c; }
.status label { display: flex; align-items: center; gap: 6px; white-space: nowrap; }
.status input { appearance: none; width: 12px; height: 12px; background: #fff; border: 1px solid #777; border-right-color: #ddd; border-bottom-color: #ddd; }
.status input:checked::after { content: ""; display: block; width: 3px; height: 6px; margin: 0 0 0 3px; border: solid #000; border-width: 0 2px 2px 0; transform: rotate(45deg); }
.status .dim { opacity: .5; }

.taskbar { flex: none; height: 39px; display: flex; align-items: center; background: linear-gradient(90deg, #8797ab, #a3bfdc 80px, #a3bfdc); border-top: 1px solid #d5e3f0; }
.taskbar button { width: 62px; height: 39px; display: grid; place-items: center; }
.taskbar button:first-child { width: 57px; padding-right: 7px; }
.taskbar svg { width: 33px; height: 33px; }
.taskbar .running { width: 60px; background: linear-gradient(#dde6f3, #f0f3fa); border: 1px solid #34465a; border-radius: 3px; }
.taskbar .running svg { width: 32px; height: 28px; }

.smoke { position: absolute; right: 211px; bottom: 0; width: 210px; height: 86px; }
.control { position: absolute; z-index: 4; right: 0; bottom: 0; width: 212px; height: 88px; background: linear-gradient(90deg, #b3bac5, #acbfd7 40%, #a0b0c4 64%, #777 68%, #999); border-left: 1px solid #55585f; border-top: 1px solid #fff; }
.control h2 { height: 25px; line-height: 24px; padding-left: 6px; color: #454b54; }
.control svg { width: 100%; height: 62px; }
.control text { font: 12px "Noto Sans CJK SC", sans-serif; }
</style>
